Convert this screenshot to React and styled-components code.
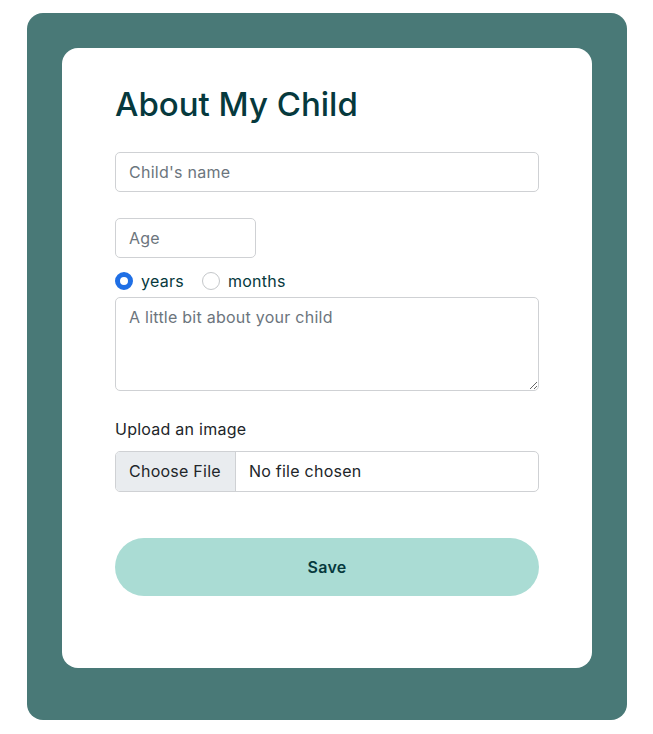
import React, { useState } from 'react';
import styled, { createGlobalStyle } from 'styled-components';

const GlobalStyle = createGlobalStyle`
  body {
    margin: 0;
    background: #fff;
    font-family: Inter, "Noto Sans", sans-serif;
    color: #212529;
  }
  * { box-sizing: border-box; }
`;

const Page = styled.div`
  padding: 13px 26px 14px 27px;
`;

const Frame = styled.div`
  width: 600px;
  height: 707px;
  background: #497977;
  border-radius: 16px;
  padding: 35px;
`;

const Card = styled.form`
  background: #fff;
  border-radius: 16px;
  height: 620px;
  padding: 36px 53px 0;
  display: flex;
  flex-direction: column;
  letter-spacing: 0.25px;
`;

const Title = styled.h1`
  margin: 0 0 28px;
  font-size: 33px;
  font-weight: 500;
  line-height: 40px;
  color: #06393d;
  letter-spacing: 0;
`;

const Field = styled.input`
  display: block;
  width: ${props => props.width || '100%'};
  height: 40px;
  padding: 6px 13px;
  font: inherit;
  font-size: 16px;
  letter-spacing: 0.25px;
  color: #212529;
  border: 1px solid #cfd1d4;
  border-radius: 5px;
  background: #fff;
  outline: none;
  margin-bottom: ${props => props.gap || 0};

  &::placeholder {
    color: #6c757d;
  }
`;

const RadioRow = styled.div`
  display: flex;
  align-items: center;
  height: 24px;
  margin: 11px 0 4px;
`;

const RadioLabel = styled.label`
  display: flex;
  align-items: center;
  gap: 8px;
  margin-right: 18px;
  font-size: 16px;
  color: #06393d;
`;

const Radio = styled.input`
  appearance: none;
  width: 18px;
  height: 18px;
  margin: 0;
  border-radius: 50%;
  border: 1px solid #c4c7ca;
  background: #fff;

  &:checked {
    border: 5px solid #1f6fe5;
    background: #fff;
  }
`;

const TextArea = styled.textarea`
  display: block;
  width: 100%;
  height: 94px;
  padding: 7px 13px;
  font: inherit;
  font-size: 16px;
  letter-spacing: 0.25px;
  line-height: 24px;
  border: 1px solid #cfd1d4;
  border-radius: 5px;
  outline: none;
  resize: vertical;

  &::placeholder {
    color: #6c757d;
  }
`;

const Label = styled.label`
  display: block;
  margin-top: 26px;
  margin-bottom: 10px;
  font-size: 16px;
  line-height: 24px;
  color: #212529;
`;

const FileInput = styled.input`
  display: block;
  width: 100%;
  height: 41px;
  font: inherit;
  font-size: 16px;
  letter-spacing: 0.25px;
  color: #212529;
  border: 1px solid #cfd1d4;
  border-radius: 5px;
  overflow: hidden;
  padding: 0;
  padding-right: 13px;
  line-height: 39px;

  &::file-selector-button {
    height: 39px;
    margin: 0 13px 0 0;
    padding: 0 14px 0 13px;
    border: none;
    border-right: 1px solid #cfd1d4;
    border-radius: 0;
    background: #e9ecef;
    font: inherit;
    font-size: 16px;
    letter-spacing: 0.25px;
    color: #212529;
  }
`;

const SaveButton = styled.button`
  margin-top: 46px;
  width: 100%;
  height: 58px;
  border: none;
  border-radius: 29px;
  background: #aadcd4;
  font: inherit;
  font-size: 16px;
  font-weight: 600;
  letter-spacing: 0.25px;
  color: #06393d;
  cursor: pointer;
`;

export default function App() {
  const [unit, setUnit] = useState('years');

  return (
    <Page>
      <GlobalStyle />
      <Frame>
        <Card onSubmit={e => e.preventDefault()}>
          <Title>About My Child</Title>
          <Field type="text" placeholder="Child's name" gap="26px" />
          <Field type="text" placeholder="Age" width="141px" />
          <RadioRow>
            <RadioLabel>
              <Radio
                type="radio"
                name="unit"
                checked={unit === 'years'}
                onChange={() => setUnit('years')}
              />
              years
            </RadioLabel>
            <RadioLabel>
              <Radio
                type="radio"
                name="unit"
                checked={unit === 'months'}
                onChange={() => setUnit('months')}
              />
              months
            </RadioLabel>
          </RadioRow>
          <TextArea placeholder="A little bit about your child" />
          <Label htmlFor="image">Upload an image</Label>
          <FileInput id="image" type="file" />
          <SaveButton type="submit">Save</SaveButton>
        </Card>
      </Frame>
    </Page>
  );
}
